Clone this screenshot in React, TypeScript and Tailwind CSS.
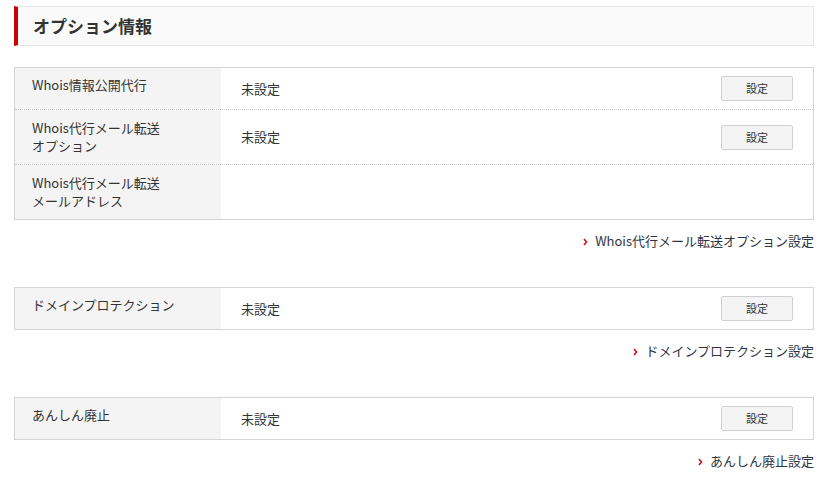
import React from 'react';

type Row = { label: string[]; value?: string; button?: boolean };

const font = { fontFamily: '"Noto Sans CJK JP", "Noto Sans", sans-serif' };

function SetButton() {
  return (
    <button className="h-[25px] w-[72px] rounded-[2px] border border-[#d0d0d0] bg-[#f4f4f4] text-[11px] leading-none text-[#333]">
      設定
    </button>
  );
}

function OptionTable({ rows }: { rows: Row[] }) {
  return (
    <div className="border border-[#d4d4d4]">
      {rows.map((row, i) => (
        <div
          key={i}
          className={`grid grid-cols-[206px_1fr] ${i > 0 ? 'border-t border-dotted border-[#c8c8c8]' : ''}`}
        >
          <div className={`bg-[#f4f4f4] px-[17px] text-[13px] leading-[18px] text-[#333] ${row.label.length > 1 ? 'py-[9px]' : 'pt-2'}`}>
            {row.label.map((l) => (
              <div key={l}>{l}</div>
            ))}
          </div>
          <div className="flex items-center justify-between py-2 pl-5 pr-5 text-[13px] text-[#333]">
            <span>{row.value}</span>
            {row.button && <SetButton />}
          </div>
        </div>
      ))}
    </div>
  );
}

function SettingLink({ text }: { text: string }) {
  return (
    <div className="mt-3 flex items-center justify-end gap-[7px] text-[13px] leading-[18px] text-[#2f3444]">
      <svg width="5" height="8" viewBox="0 0 5 8" className="mt-[1px]">
        <path d="M1 1l2.5 3L1 7" fill="none" stroke="#d0101b" strokeWidth="1.6" />
      </svg>
      <span>{text}</span>
    </div>
  );
}

export default function App() {
  return (
    <div className="min-h-[480px] bg-white px-[14px] pt-[6px] pr-[17px]" style={font}>
      {/* Header */}
      <div className="flex h-10 items-center border border-l-4 border-[#e6e6e6] border-l-[#cc0000] bg-[#fafafa] pl-[15px]">
        <h2 className="text-[17px] font-bold text-[#333]">オプション情報</h2>
      </div>

      <div className="mt-[21px]">
        <OptionTable
          rows={[
            { label: ['Whois情報公開代行'], value: '未設定', button: true },
            { label: ['Whois代行メール転送', 'オプション'], value: '未設定', button: true },
            { label: ['Whois代行メール転送', 'メールアドレス'] },
          ]}
        />
        <SettingLink text="Whois代行メール転送オプション設定" />
      </div>

      <div className="mt-[37px]">
        <OptionTable rows={[{ label: ['ドメインプロテクション'], value: '未設定', button: true }]} />
        <SettingLink text="ドメインプロテクション設定" />
      </div>

      <div className="mt-[37px]">
        <OptionTable rows={[{ label: ['あんしん廃止'], value: '未設定', button: true }]} />
        <SettingLink text="あんしん廃止設定" />
      </div>
    </div>
  );
}
